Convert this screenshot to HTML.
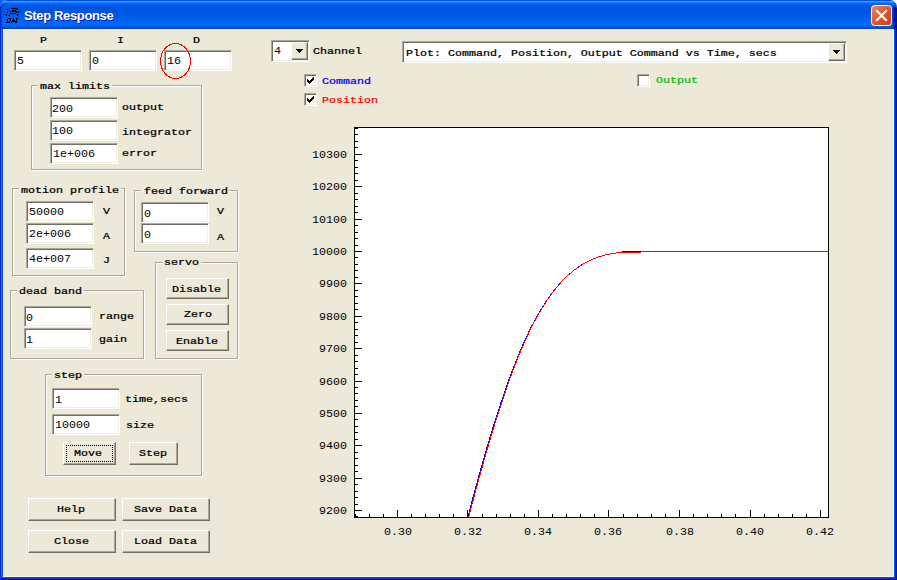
<!DOCTYPE html>
<html><head><meta charset="utf-8">
<style>
html,body{margin:0;padding:0;width:897px;height:580px;overflow:hidden;background:#fff;}
#tlc{position:absolute;left:0;top:0;width:10px;height:10px;background:#0A5CF0;}
*{box-sizing:border-box;}
#win{position:absolute;left:0;top:0;width:897px;height:580px;overflow:hidden;border-radius:7px 7px 0 0;
 background:#ECE9D8;color:#000;}
#win div{position:absolute;}
#title{left:0;top:0;width:897px;height:29px;
 background:linear-gradient(to bottom,#0050E0 0px,#0050E0 1px,#3D98FF 1px,#3D98FF 2px,#1A80FF 2px,#1A80FF 3px,#0066FF 3px,#0066FF 4px,#0060F0 4px,#0060F0 5px,#0058E6 5px,#0058E6 6px,#0054E2 7px,#0053E0 11px,#0055E5 14px,#005CEC 17px,#0062F4 19px,#0066FC 22px,#0068FF 24px,#0064FC 25px,#0060F4 26px,#0060F4 27px,#0050DD 27px,#0050DD 28px,#0040CC 28px,#0040CC 29px);}
#ttext{left:24px;top:7px;font-family:"Liberation Sans",sans-serif;font-weight:bold;font-size:13px;line-height:18px;color:#fff;text-shadow:1px 1px 0 #0A1E9A;white-space:nowrap;letter-spacing:-0.35px;}
.edit{background:#fff;border:1px solid;border-color:#ACA899 #fff #fff #ACA899;box-shadow:inset 1px 1px 0 #716F64,inset -1px -1px 0 #F1EFE2;}
.btn{background:#ECE9D8;border:1px solid;border-color:#FFF #716F64 #716F64 #FFF;box-shadow:inset -1px -1px 0 #ACA899;}
.btn.def{}
.focus{left:2px;top:2px;right:2px;bottom:2px;border:1px dotted #000;}
.g1{border:1px solid #ACA899;}
.g2{border:1px solid #fff;}
.gcut{background:#ECE9D8;}
.fl{position:absolute;}
.b{font:11.67px "Liberation Mono",monospace;line-height:14px;white-space:nowrap;-webkit-text-stroke:0.3px currentColor;transform:scaleY(0.8);transform-origin:0 0}
.r{font:11.67px "Liberation Mono",monospace;line-height:14px;white-space:nowrap}
</style></head><body>
<div id="tlc"></div>
<div id="win">
 <div id="title"></div>
 <!-- frame -->
 <div style="left:892px;top:4px;width:1px;height:25px;background:linear-gradient(#0058F0,#0048E0 6px,#0048E0)"></div>
 <div style="left:893px;top:5px;width:1px;height:24px;background:linear-gradient(#0040D8,#0030C8 5px)"></div>
 <div style="left:894px;top:6px;width:1px;height:23px;background:#0020A8"></div>
 <div style="left:895px;top:7px;width:1px;height:22px;background:#001890"></div>
 <div style="left:896px;top:8px;width:1px;height:21px;background:#001080"></div>
 <div style="left:0;top:6px;width:1px;height:23px;background:#0028C8"></div>
 <div style="left:1px;top:4px;width:1px;height:25px;background:#0044DC"></div>
 <div style="left:0;top:29px;width:1px;height:551px;background:#0A28D8"></div>
 <div style="left:1px;top:29px;width:1px;height:551px;background:#1670F0"></div>
 <div style="left:2px;top:29px;width:1px;height:551px;background:#0050E0"></div>
 <div style="left:3px;top:29px;width:1px;height:548px;background:#FFF5DA"></div>
 <div style="left:894px;top:29px;width:1px;height:551px;background:#0A50E8"></div>
 <div style="left:895px;top:29px;width:1px;height:551px;background:#0030C0"></div>
 <div style="left:896px;top:29px;width:1px;height:551px;background:#001A90"></div>
 <div style="left:893px;top:29px;width:1px;height:548px;background:#FFF5DA"></div>
 <div style="left:3px;top:29px;width:891px;height:1px;background:#FFF5DA"></div>
 <div style="left:3px;top:576px;width:891px;height:1px;background:#FFF5DA"></div>
 <div style="left:0;top:577px;width:894px;height:1px;background:#0050F0"></div>
 <div style="left:0;top:578px;width:895px;height:1px;background:#0030C0"></div>
 <div style="left:0;top:579px;width:896px;height:1px;background:#001A90"></div>

 <!-- title icon -->
 <svg class="fl" style="left:0;top:0" width="24" height="26" shape-rendering="crispEdges"><path d="M11 8h7v1h-7zM17 9h1v1h-1zM7 9h1v1h-1zM10 11h1v1h-1zM12 10h2v2h-2zM14 10h2v1h-2zM15 11h2v1h-2zM16 12h1v1h-1zM7 12h1v1h-1zM18 11h1v2h-1zM10 13h6v1h-6zM6 14h1v2h-1zM8 15h2v1h-2zM17 14h1v2h-1zM8 18h3v1h-3zM7 19h1v3h-1zM10 19h1v2h-1zM9 21h1v1h-1zM6 22h4v1h-4zM11 22h1v1h-1zM13 18h1v2h-1zM12 20h3v2h-3zM16 18h2v1h-2zM16 19h1v2h-1zM15 21h2v2h-2z" fill="#000"/></svg>
 <div id="ttext">Step Response</div>
 <!-- close button -->
 <svg class="fl" style="left:871px;top:5px" width="21" height="21" viewBox="0 0 21 21">
  <defs>
   <linearGradient id="cg" x1="0" y1="0" x2="1" y2="1">
    <stop offset="0" stop-color="#F08A6C"/><stop offset="0.45" stop-color="#E4582F"/><stop offset="1" stop-color="#CC3A0E"/>
   </linearGradient>
  </defs>
  <rect x="0.5" y="0.5" width="20" height="20" rx="3" ry="3" fill="url(#cg)" stroke="#fff" stroke-width="1"/>
  <path d="M6 6L15 15M15 6L6 15" stroke="#fff" stroke-width="2.2" stroke-linecap="square"/>
 </svg>

<div class="edit" style="left:14px;top:50px;width:68px;height:21px"></div>
<div class="edit" style="left:89px;top:50px;width:68px;height:21px"></div>
<div class="edit" style="left:164px;top:50px;width:68px;height:21px"></div>
<div class="g2" style="left:32px;top:86px;width:171px;height:85px"></div><div class="g1" style="left:31px;top:85px;width:171px;height:85px"></div><div class="gcut" style="left:38px;top:84px;width:74px;height:3px"></div>
<div class="edit" style="left:50px;top:97px;width:68px;height:21px"></div>
<div class="edit" style="left:50px;top:120px;width:68px;height:21px"></div>
<div class="edit" style="left:50px;top:143px;width:68px;height:21px"></div>
<div class="g2" style="left:13px;top:189px;width:113px;height:88px"></div><div class="g1" style="left:12px;top:188px;width:113px;height:88px"></div><div class="gcut" style="left:19px;top:187px;width:102px;height:3px"></div>
<div class="edit" style="left:26px;top:201px;width:68px;height:21px"></div>
<div class="edit" style="left:26px;top:223px;width:68px;height:21px"></div>
<div class="edit" style="left:26px;top:248px;width:68px;height:21px"></div>
<div class="g2" style="left:135px;top:191px;width:104px;height:62px"></div><div class="g1" style="left:134px;top:190px;width:104px;height:62px"></div><div class="gcut" style="left:141px;top:189px;width:88px;height:3px"></div>
<div class="edit" style="left:141px;top:202px;width:68px;height:21px"></div>
<div class="edit" style="left:141px;top:223px;width:68px;height:21px"></div>
<div class="g2" style="left:156px;top:263px;width:83px;height:97px"></div><div class="g1" style="left:155px;top:262px;width:83px;height:97px"></div><div class="gcut" style="left:162px;top:261px;width:39px;height:3px"></div>
<div class="btn" style="left:166px;top:278px;width:63px;height:21px"></div>
<div class="btn" style="left:166px;top:304px;width:63px;height:21px"></div>
<div class="btn" style="left:166px;top:330px;width:63px;height:21px"></div>
<div class="g2" style="left:11px;top:291px;width:134px;height:69px"></div><div class="g1" style="left:10px;top:290px;width:134px;height:69px"></div><div class="gcut" style="left:17px;top:289px;width:67px;height:3px"></div>
<div class="edit" style="left:24px;top:306px;width:68px;height:21px"></div>
<div class="edit" style="left:24px;top:328px;width:68px;height:21px"></div>
<div class="g2" style="left:46px;top:375px;width:157px;height:102px"></div><div class="g1" style="left:45px;top:374px;width:157px;height:102px"></div><div class="gcut" style="left:52px;top:373px;width:32px;height:3px"></div>
<div class="edit" style="left:52px;top:388px;width:68px;height:21px"></div>
<div class="edit" style="left:52px;top:414px;width:68px;height:21px"></div>
<div class="btn def" style="left:63px;top:442px;width:53px;height:23px"><div class="focus"></div></div>
<div class="btn" style="left:129px;top:442px;width:49px;height:23px"></div>
<div class="btn" style="left:28px;top:498px;width:88px;height:23px"></div>
<div class="btn" style="left:122px;top:498px;width:88px;height:23px"></div>
<div class="btn" style="left:28px;top:530px;width:88px;height:23px"></div>
<div class="btn" style="left:122px;top:530px;width:88px;height:23px"></div>
<div class="edit" style="left:271px;top:40px;width:39px;height:22px"></div>
<div class="btn" style="left:291px;top:42px;width:17px;height:18px"></div>
<svg style="position:absolute;left:296px;top:49px" width="7" height="4"><path d="M0 0h7v1h-1v1h-1v1h-1v1h-1v-1h-1v-1h-1v-1h-1z" fill="#000" shape-rendering="crispEdges"/></svg>
<div class="edit" style="left:402px;top:41px;width:445px;height:22px"></div>
<div class="btn" style="left:828px;top:43px;width:17px;height:18px"></div>
<svg style="position:absolute;left:833px;top:50px" width="7" height="4"><path d="M0 0h7v1h-1v1h-1v1h-1v1h-1v-1h-1v-1h-1v-1h-1z" fill="#000" shape-rendering="crispEdges"/></svg>
<div class="edit" style="left:304px;top:74px;width:13px;height:13px"></div>
<svg style="position:absolute;left:307px;top:77px" width="7" height="7" shape-rendering="crispEdges"><path d="M6 0h1v3h-1zM5 1h1v3h-1zM0 2h1v3h-1zM1 3h1v3h-1zM2 4h1v3h-1zM3 3h1v3h-1zM4 2h1v3h-1z" fill="#000"/></svg>
<div class="edit" style="left:304px;top:93px;width:13px;height:13px"></div>
<svg style="position:absolute;left:307px;top:96px" width="7" height="7" shape-rendering="crispEdges"><path d="M6 0h1v3h-1zM5 1h1v3h-1zM0 2h1v3h-1zM1 3h1v3h-1zM2 4h1v3h-1zM3 3h1v3h-1zM4 2h1v3h-1z" fill="#000"/></svg>
<div class="edit" style="left:637px;top:74px;width:13px;height:13px"></div>

 <svg class="fl" style="left:155px;top:40px" width="40" height="42" shape-rendering="crispEdges"><ellipse cx="20.5" cy="21" rx="15" ry="17.5" fill="none" stroke="#FF0000" stroke-width="1"/></svg>

 <!-- chart -->
 <div style="left:354px;top:127px;width:475px;height:391px;background:#fff"></div>
 <svg class="fl" style="left:0;top:0" width="897" height="580" shape-rendering="crispEdges">
  <path d="M467 516h1v1h-1zM468 513h1v3h-1zM469 509h1v4h-1zM470 505h1v4h-1zM471 501h1v4h-1zM472 497h1v4h-1zM473 494h1v3h-1zM474 490h1v4h-1zM475 486h1v4h-1zM476 483h1v3h-1zM477 479h1v4h-1zM478 475h1v4h-1zM479 472h1v3h-1zM480 468h1v4h-1zM481 465h1v3h-1zM482 461h1v4h-1zM483 458h1v3h-1zM484 454h1v4h-1zM485 451h1v3h-1zM486 447h1v4h-1zM487 444h1v3h-1zM488 441h1v3h-1zM489 437h1v4h-1zM490 434h1v3h-1zM491 431h1v3h-1zM492 427h1v4h-1zM493 424h1v3h-1zM494 421h1v3h-1zM495 418h1v3h-1zM496 415h1v3h-1zM497 412h1v3h-1zM498 409h1v3h-1zM499 406h1v3h-1zM500 402h1v4h-1zM501 400h1v2h-1zM502 397h1v3h-1zM503 394h1v3h-1zM504 391h1v3h-1zM505 388h1v3h-1zM506 385h1v3h-1zM507 382h1v3h-1zM508 379h1v3h-1zM509 377h1v2h-1zM510 374h1v3h-1zM511 371h1v3h-1zM512 369h1v2h-1zM513 366h1v3h-1zM514 364h1v2h-1zM515 361h1v3h-1zM516 359h1v2h-1zM517 356h1v3h-1zM518 354h1v2h-1zM519 351h1v3h-1zM520 349h1v2h-1zM521 347h1v2h-1zM522 344h1v3h-1zM523 342h1v2h-1zM524 340h1v2h-1zM525 338h1v2h-1zM526 336h1v2h-1zM527 334h1v2h-1zM528 331h1v3h-1zM529 329h1v2h-1zM530 327h1v2h-1zM531 325h1v2h-1zM532 324h1v1h-1zM533 322h1v2h-1zM534 320h1v2h-1zM535 318h1v2h-1zM536 316h1v2h-1zM537 314h1v2h-1zM538 313h1v1h-1zM539 311h1v2h-1zM540 309h1v2h-1zM541 308h1v1h-1zM542 306h1v2h-1zM543 305h1v1h-1zM544 303h1v2h-1zM545 301h1v2h-1zM546 300h1v1h-1zM547 299h1v1h-1zM548 297h1v2h-1zM549 296h1v1h-1zM550 294h1v2h-1zM551 293h1v1h-1zM552 292h1v1h-1zM553 290h1v2h-1zM554 289h1v1h-1zM555 288h1v1h-1zM556 287h1v1h-1zM557 286h1v1h-1zM558 284h1v2h-1zM559 283h1v1h-1zM560 282h1v1h-1zM561 281h1v1h-1zM562 280h1v1h-1zM563 279h1v1h-1zM564 278h1v1h-1zM565 277h1v1h-1zM566 276h1v1h-1zM567 275h1v1h-1zM568 274h1v1h-1zM569 273h1v1h-1zM570 273h1v1h-1zM571 272h1v1h-1zM572 271h1v1h-1zM573 270h1v1h-1zM574 269h1v1h-1zM575 269h1v1h-1zM576 268h1v1h-1zM577 267h1v1h-1zM578 266h1v1h-1zM579 266h1v1h-1zM580 265h1v1h-1zM581 264h1v1h-1zM582 264h1v1h-1zM583 263h1v1h-1zM584 263h1v1h-1zM585 262h1v1h-1zM586 262h1v1h-1zM587 261h1v1h-1zM588 261h1v1h-1zM589 260h1v1h-1zM590 260h1v1h-1zM591 259h1v1h-1zM592 259h1v1h-1zM593 258h1v1h-1zM594 258h1v1h-1zM595 258h1v1h-1zM596 257h1v1h-1zM597 257h1v1h-1zM598 256h1v1h-1zM599 256h1v1h-1zM600 256h1v1h-1zM601 256h1v1h-1zM602 255h1v1h-1zM603 255h1v1h-1zM604 255h1v1h-1zM605 254h1v1h-1zM606 254h1v1h-1zM607 254h1v1h-1zM608 254h1v1h-1zM609 254h1v1h-1zM610 253h1v1h-1zM611 253h1v1h-1zM612 253h1v1h-1zM613 253h1v1h-1zM614 253h1v1h-1zM615 253h1v1h-1zM616 252h1v1h-1zM617 252h1v1h-1zM618 252h1v1h-1zM619 252h1v1h-1zM620 252h1v1h-1zM621 252h1v1h-1zM622 252h1v1h-1zM623 252h1v1h-1zM624 252h1v1h-1zM625 252h1v1h-1zM626 251h1v1h-1zM627 251h1v1h-1zM628 251h1v1h-1zM629 251h1v1h-1zM630 251h1v1h-1zM631 251h1v1h-1zM632 251h1v1h-1zM633 251h1v1h-1zM634 251h1v1h-1zM635 251h1v1h-1zM636 251h1v1h-1zM637 251h1v1h-1zM638 251h1v1h-1zM639 251h1v1h-1zM640 251h1v1h-1zM641 251h1v1h-1zM642 251h1v1h-1zM643 251h1v1h-1zM644 251h1v1h-1zM645 251h1v1h-1zM646 251h1v1h-1zM647 251h1v1h-1zM648 251h1v1h-1zM649 251h1v1h-1zM650 251h1v1h-1zM651 251h1v1h-1zM652 251h1v1h-1zM653 251h1v1h-1zM654 251h1v1h-1zM655 251h1v1h-1zM656 251h1v1h-1zM657 251h1v1h-1zM658 251h1v1h-1zM659 251h1v1h-1zM660 251h1v1h-1zM661 251h1v1h-1zM662 251h1v1h-1zM663 251h1v1h-1zM664 251h1v1h-1zM665 251h1v1h-1zM666 251h1v1h-1zM667 251h1v1h-1zM668 251h1v1h-1zM669 251h1v1h-1zM670 251h1v1h-1zM671 251h1v1h-1zM672 251h1v1h-1zM673 251h1v1h-1zM674 251h1v1h-1zM675 251h1v1h-1zM676 251h1v1h-1zM677 251h1v1h-1zM678 251h1v1h-1zM679 251h1v1h-1zM680 251h1v1h-1zM681 251h1v1h-1zM682 251h1v1h-1zM683 251h1v1h-1zM684 251h1v1h-1zM685 251h1v1h-1zM686 251h1v1h-1zM687 251h1v1h-1zM688 251h1v1h-1zM689 251h1v1h-1zM690 251h1v1h-1zM691 251h1v1h-1zM692 251h1v1h-1zM693 251h1v1h-1zM694 251h1v1h-1zM695 251h1v1h-1zM696 251h1v1h-1zM697 251h1v1h-1zM698 251h1v1h-1zM699 251h1v1h-1zM700 251h1v1h-1zM701 251h1v1h-1zM702 251h1v1h-1zM703 251h1v1h-1zM704 251h1v1h-1zM705 251h1v1h-1zM706 251h1v1h-1zM707 251h1v1h-1zM708 251h1v1h-1zM709 251h1v1h-1zM710 251h1v1h-1zM711 251h1v1h-1zM712 251h1v1h-1zM713 251h1v1h-1zM714 251h1v1h-1zM715 251h1v1h-1zM716 251h1v1h-1zM717 251h1v1h-1zM718 251h1v1h-1zM719 251h1v1h-1zM720 251h1v1h-1zM721 251h1v1h-1zM722 251h1v1h-1zM723 251h1v1h-1zM724 251h1v1h-1zM725 251h1v1h-1zM726 251h1v1h-1zM727 251h1v1h-1zM728 251h1v1h-1zM729 251h1v1h-1zM730 251h1v1h-1zM731 251h1v1h-1zM732 251h1v1h-1zM733 251h1v1h-1zM734 251h1v1h-1zM735 251h1v1h-1zM736 251h1v1h-1zM737 251h1v1h-1zM738 251h1v1h-1zM739 251h1v1h-1zM740 251h1v1h-1zM741 251h1v1h-1zM742 251h1v1h-1zM743 251h1v1h-1zM744 251h1v1h-1zM745 251h1v1h-1zM746 251h1v1h-1zM747 251h1v1h-1zM748 251h1v1h-1zM749 251h1v1h-1zM750 251h1v1h-1zM751 251h1v1h-1zM752 251h1v1h-1zM753 251h1v1h-1zM754 251h1v1h-1zM755 251h1v1h-1zM756 251h1v1h-1zM757 251h1v1h-1zM758 251h1v1h-1zM759 251h1v1h-1zM760 251h1v1h-1zM761 251h1v1h-1zM762 251h1v1h-1zM763 251h1v1h-1zM764 251h1v1h-1zM765 251h1v1h-1zM766 251h1v1h-1zM767 251h1v1h-1zM768 251h1v1h-1zM769 251h1v1h-1zM770 251h1v1h-1zM771 251h1v1h-1zM772 251h1v1h-1zM773 251h1v1h-1zM774 251h1v1h-1zM775 251h1v1h-1zM776 251h1v1h-1zM777 251h1v1h-1zM778 251h1v1h-1zM779 251h1v1h-1zM780 251h1v1h-1zM781 251h1v1h-1zM782 251h1v1h-1zM783 251h1v1h-1zM784 251h1v1h-1zM785 251h1v1h-1zM786 251h1v1h-1zM787 251h1v1h-1zM788 251h1v1h-1zM789 251h1v1h-1zM790 251h1v1h-1zM791 251h1v1h-1zM792 251h1v1h-1zM793 251h1v1h-1zM794 251h1v1h-1zM795 251h1v1h-1zM796 251h1v1h-1zM797 251h1v1h-1zM798 251h1v1h-1zM799 251h1v1h-1zM800 251h1v1h-1zM801 251h1v1h-1zM802 251h1v1h-1zM803 251h1v1h-1zM804 251h1v1h-1zM805 251h1v1h-1zM806 251h1v1h-1zM807 251h1v1h-1zM808 251h1v1h-1zM809 251h1v1h-1zM810 251h1v1h-1zM811 251h1v1h-1zM812 251h1v1h-1zM813 251h1v1h-1zM814 251h1v1h-1zM815 251h1v1h-1zM816 251h1v1h-1zM817 251h1v1h-1zM818 251h1v1h-1zM819 251h1v1h-1zM820 251h1v1h-1zM821 251h1v1h-1zM822 251h1v1h-1zM823 251h1v1h-1zM824 251h1v1h-1zM825 251h1v1h-1zM826 251h1v1h-1zM827 251h1v1h-1z" fill="#0000FF"/>
  <path d="M468 516h1v1h-1zM469 512h1v4h-1zM470 508h1v4h-1zM471 504h1v4h-1zM472 501h1v3h-1zM473 497h1v4h-1zM474 493h1v4h-1zM475 489h1v4h-1zM476 486h1v3h-1zM477 482h1v4h-1zM478 478h1v4h-1zM479 475h1v3h-1zM480 471h1v4h-1zM481 468h1v3h-1zM482 464h1v4h-1zM483 460h1v4h-1zM484 457h1v3h-1zM485 453h1v4h-1zM486 450h1v3h-1zM487 447h1v3h-1zM488 443h1v4h-1zM489 440h1v3h-1zM490 436h1v4h-1zM491 433h1v3h-1zM492 430h1v3h-1zM493 427h1v3h-1zM494 423h1v4h-1zM495 420h1v3h-1zM496 417h1v3h-1zM497 414h1v3h-1zM498 411h1v3h-1zM499 408h1v3h-1zM500 405h1v3h-1zM501 402h1v3h-1zM502 399h1v3h-1zM503 396h1v3h-1zM504 393h1v3h-1zM505 390h1v3h-1zM506 387h1v3h-1zM507 384h1v3h-1zM508 381h1v3h-1zM509 378h1v3h-1zM510 376h1v2h-1zM511 373h1v3h-1zM512 370h1v3h-1zM513 368h1v2h-1zM514 365h1v3h-1zM515 363h1v2h-1zM516 360h1v3h-1zM517 357h1v3h-1zM518 355h1v2h-1zM519 353h1v2h-1zM520 350h1v3h-1zM521 348h1v2h-1zM522 346h1v2h-1zM523 343h1v3h-1zM524 341h1v2h-1zM525 339h1v2h-1zM526 337h1v2h-1zM527 335h1v2h-1zM528 332h1v3h-1zM529 330h1v2h-1zM530 328h1v2h-1zM531 326h1v2h-1zM532 324h1v2h-1zM533 322h1v2h-1zM534 321h1v1h-1zM535 319h1v2h-1zM536 317h1v2h-1zM537 315h1v2h-1zM538 313h1v2h-1zM539 312h1v1h-1zM540 310h1v2h-1zM541 308h1v2h-1zM542 307h1v1h-1zM543 305h1v2h-1zM544 304h1v1h-1zM545 302h1v2h-1zM546 300h1v2h-1zM547 299h1v1h-1zM548 298h1v1h-1zM549 296h1v2h-1zM550 295h1v1h-1zM551 293h1v2h-1zM552 292h1v1h-1zM553 291h1v1h-1zM554 290h1v1h-1zM555 288h1v2h-1zM556 287h1v1h-1zM557 286h1v1h-1zM558 285h1v1h-1zM559 284h1v1h-1zM560 282h1v2h-1zM561 281h1v1h-1zM562 280h1v1h-1zM563 279h1v1h-1zM564 278h1v1h-1zM565 277h1v1h-1zM566 276h1v1h-1zM567 275h1v1h-1zM568 274h1v1h-1zM569 274h1v1h-1zM570 273h1v1h-1zM571 272h1v1h-1zM572 271h1v1h-1zM573 270h1v1h-1zM574 269h1v1h-1zM575 269h1v1h-1zM576 268h1v1h-1zM577 267h1v1h-1zM578 267h1v1h-1zM579 266h1v1h-1zM580 265h1v1h-1zM581 265h1v1h-1zM582 264h1v1h-1zM583 263h1v1h-1zM584 263h1v1h-1zM585 262h1v1h-1zM586 262h1v1h-1zM587 261h1v1h-1zM588 261h1v1h-1zM589 260h1v1h-1zM590 260h1v1h-1zM591 259h1v1h-1zM592 259h1v1h-1zM593 258h1v1h-1zM594 258h1v1h-1zM595 258h1v1h-1zM596 257h1v1h-1zM597 257h1v1h-1zM598 256h1v1h-1zM599 256h1v1h-1zM600 256h1v1h-1zM601 256h1v1h-1zM602 255h1v1h-1zM603 255h1v1h-1zM604 255h1v1h-1zM605 254h1v1h-1zM606 254h1v1h-1zM607 254h1v1h-1zM608 254h1v1h-1zM609 254h1v1h-1zM610 253h1v1h-1zM611 253h1v1h-1zM612 253h1v1h-1zM613 253h1v1h-1zM614 253h1v1h-1zM615 253h1v1h-1zM616 252h1v1h-1zM617 252h1v1h-1zM618 252h1v1h-1zM619 252h1v1h-1zM620 252h1v1h-1zM621 252h1v1h-1zM622 252h1v1h-1zM623 252h1v1h-1zM624 252h1v1h-1zM625 252h1v1h-1zM626 252h1v1h-1zM627 252h1v1h-1zM628 252h1v1h-1zM629 252h1v1h-1zM630 252h1v1h-1zM631 252h1v1h-1zM632 252h1v1h-1zM633 252h1v1h-1zM634 252h1v1h-1zM635 252h1v1h-1zM636 252h1v1h-1zM637 252h1v1h-1zM638 252h1v1h-1zM639 252h1v1h-1zM640 252h1v1h-1zM641 251h1v1h-1zM642 251h1v1h-1zM643 251h1v1h-1zM644 251h1v1h-1zM645 251h1v1h-1zM646 251h1v1h-1zM647 251h1v1h-1zM648 251h1v1h-1zM649 251h1v1h-1zM650 251h1v1h-1zM651 251h1v1h-1zM652 251h1v1h-1zM653 251h1v1h-1zM654 251h1v1h-1zM655 251h1v1h-1zM656 251h1v1h-1zM657 251h1v1h-1zM658 251h1v1h-1zM659 251h1v1h-1zM660 251h1v1h-1zM661 251h1v1h-1zM662 251h1v1h-1zM663 251h1v1h-1zM664 251h1v1h-1zM665 251h1v1h-1zM666 251h1v1h-1zM667 251h1v1h-1zM668 251h1v1h-1zM669 251h1v1h-1zM670 251h1v1h-1zM671 251h1v1h-1zM672 251h1v1h-1zM673 251h1v1h-1zM674 251h1v1h-1zM675 251h1v1h-1zM676 251h1v1h-1zM677 251h1v1h-1zM678 251h1v1h-1zM679 251h1v1h-1zM680 251h1v1h-1zM681 251h1v1h-1zM682 251h1v1h-1zM683 251h1v1h-1zM684 251h1v1h-1zM685 251h1v1h-1zM686 251h1v1h-1zM687 251h1v1h-1zM688 251h1v1h-1zM689 251h1v1h-1zM690 251h1v1h-1zM691 251h1v1h-1zM692 251h1v1h-1zM693 251h1v1h-1zM694 251h1v1h-1zM695 251h1v1h-1zM696 251h1v1h-1zM697 251h1v1h-1zM698 251h1v1h-1zM699 251h1v1h-1zM700 251h1v1h-1zM701 251h1v1h-1zM702 251h1v1h-1zM703 251h1v1h-1zM704 251h1v1h-1zM705 251h1v1h-1zM706 251h1v1h-1zM707 251h1v1h-1zM708 251h1v1h-1zM709 251h1v1h-1zM710 251h1v1h-1zM711 251h1v1h-1zM712 251h1v1h-1zM713 251h1v1h-1zM714 251h1v1h-1zM715 251h1v1h-1zM716 251h1v1h-1zM717 251h1v1h-1zM718 251h1v1h-1zM719 251h1v1h-1zM720 251h1v1h-1zM721 251h1v1h-1zM722 251h1v1h-1zM723 251h1v1h-1zM724 251h1v1h-1zM725 251h1v1h-1zM726 251h1v1h-1zM727 251h1v1h-1zM728 251h1v1h-1zM729 251h1v1h-1zM730 251h1v1h-1zM731 251h1v1h-1zM732 251h1v1h-1zM733 251h1v1h-1zM734 251h1v1h-1zM735 251h1v1h-1zM736 251h1v1h-1zM737 251h1v1h-1zM738 251h1v1h-1zM739 251h1v1h-1zM740 251h1v1h-1zM741 251h1v1h-1zM742 251h1v1h-1zM743 251h1v1h-1zM744 251h1v1h-1zM745 251h1v1h-1zM746 251h1v1h-1zM747 251h1v1h-1zM748 251h1v1h-1zM749 251h1v1h-1zM750 251h1v1h-1zM751 251h1v1h-1zM752 251h1v1h-1zM753 251h1v1h-1zM754 251h1v1h-1zM755 251h1v1h-1zM756 251h1v1h-1zM757 251h1v1h-1zM758 251h1v1h-1zM759 251h1v1h-1zM760 251h1v1h-1zM761 251h1v1h-1zM762 251h1v1h-1zM763 251h1v1h-1zM764 251h1v1h-1zM765 251h1v1h-1zM766 251h1v1h-1zM767 251h1v1h-1zM768 251h1v1h-1zM769 251h1v1h-1zM770 251h1v1h-1zM771 251h1v1h-1zM772 251h1v1h-1zM773 251h1v1h-1zM774 251h1v1h-1zM775 251h1v1h-1zM776 251h1v1h-1zM777 251h1v1h-1zM778 251h1v1h-1zM779 251h1v1h-1zM780 251h1v1h-1zM781 251h1v1h-1zM782 251h1v1h-1zM783 251h1v1h-1zM784 251h1v1h-1zM785 251h1v1h-1zM786 251h1v1h-1zM787 251h1v1h-1zM788 251h1v1h-1zM789 251h1v1h-1zM790 251h1v1h-1zM791 251h1v1h-1zM792 251h1v1h-1zM793 251h1v1h-1zM794 251h1v1h-1zM795 251h1v1h-1zM796 251h1v1h-1zM797 251h1v1h-1zM798 251h1v1h-1zM799 251h1v1h-1zM800 251h1v1h-1zM801 251h1v1h-1zM802 251h1v1h-1zM803 251h1v1h-1zM804 251h1v1h-1zM805 251h1v1h-1zM806 251h1v1h-1zM807 251h1v1h-1zM808 251h1v1h-1zM809 251h1v1h-1zM810 251h1v1h-1zM811 251h1v1h-1zM812 251h1v1h-1zM813 251h1v1h-1zM814 251h1v1h-1zM815 251h1v1h-1zM816 251h1v1h-1zM817 251h1v1h-1zM818 251h1v1h-1zM819 251h1v1h-1zM820 251h1v1h-1zM821 251h1v1h-1zM822 251h1v1h-1zM823 251h1v1h-1zM824 251h1v1h-1zM825 251h1v1h-1zM826 251h1v1h-1zM827 251h1v1h-1z" fill="#FF0000"/>
  <path d="M622 251h19v1h-19z" fill="#0000FF"/>
  <rect x="354.5" y="127.5" width="474" height="390" fill="none" stroke="#000" stroke-width="1"/>
  <path d="M355 516.5h3M355 510.5h7M355 504.5h3M355 497.5h3M355 491.5h3M355 484.5h3M355 478.5h7M355 471.5h3M355 465.5h3M355 458.5h3M355 452.5h3M355 445.5h7M355 439.5h3M355 432.5h3M355 426.5h3M355 419.5h3M355 413.5h7M355 406.5h3M355 400.5h3M355 393.5h3M355 387.5h3M355 381.5h7M355 374.5h3M355 368.5h3M355 361.5h3M355 355.5h3M355 348.5h7M355 342.5h3M355 335.5h3M355 329.5h3M355 322.5h3M355 316.5h7M355 309.5h3M355 303.5h3M355 296.5h3M355 290.5h3M355 283.5h7M355 277.5h3M355 270.5h3M355 264.5h3M355 257.5h3M355 251.5h7M355 245.5h3M355 238.5h3M355 232.5h3M355 225.5h3M355 219.5h7M355 212.5h3M355 206.5h3M355 199.5h3M355 193.5h3M355 186.5h7M355 180.5h3M355 173.5h3M355 167.5h3M355 160.5h3M355 154.5h7M355 147.5h3M355 141.5h3M355 134.5h3M355 128.5h3M355.5 517v-3M369.5 517v-3M383.5 517v-3M397.5 517v-7M411.5 517v-3M425.5 517v-3M439.5 517v-3M453.5 517v-3M467.5 517v-7M482.5 517v-3M496.5 517v-3M510.5 517v-3M524.5 517v-3M538.5 517v-7M552.5 517v-3M566.5 517v-3M580.5 517v-3M594.5 517v-3M608.5 517v-7M623.5 517v-3M637.5 517v-3M651.5 517v-3M665.5 517v-3M679.5 517v-7M693.5 517v-3M707.5 517v-3M721.5 517v-3M735.5 517v-3M750.5 517v-7M764.5 517v-3M778.5 517v-3M792.5 517v-3M806.5 517v-3M820.5 517v-7" stroke="#000" stroke-width="1" fill="none"/>
 </svg>

<div class="b" style="left:40px;top:35px">P</div>
<div class="b" style="left:117px;top:35px">I</div>
<div class="b" style="left:193px;top:35px">D</div>
<div class="r" style="left:17px;top:54px">5</div>
<div class="r" style="left:92px;top:54px">0</div>
<div class="r" style="left:167px;top:54px">16</div>
<div class="b" style="left:40px;top:81px">max limits</div>
<div class="r" style="left:52px;top:102px">200</div>
<div class="r" style="left:52px;top:124px">100</div>
<div class="r" style="left:53px;top:147px">1e+006</div>
<div class="b" style="left:122px;top:102px">output</div>
<div class="b" style="left:122px;top:127px">integrator</div>
<div class="b" style="left:122px;top:148px">error</div>
<div class="b" style="left:21px;top:185px">motion profile</div>
<div class="r" style="left:29px;top:205px">50000</div>
<div class="r" style="left:29px;top:227px">2e+006</div>
<div class="r" style="left:29px;top:252px">4e+007</div>
<div class="b" style="left:103px;top:206px">V</div>
<div class="b" style="left:103px;top:231px">A</div>
<div class="b" style="left:103px;top:255px">J</div>
<div class="b" style="left:144px;top:186px">feed forward</div>
<div class="r" style="left:144px;top:207px">0</div>
<div class="r" style="left:144px;top:228px">0</div>
<div class="b" style="left:217px;top:206px">V</div>
<div class="b" style="left:217px;top:232px">A</div>
<div class="b" style="left:164px;top:257px">servo</div>
<div class="b" style="left:172px;top:284px">Disable</div>
<div class="b" style="left:184px;top:309px">Zero</div>
<div class="b" style="left:176px;top:336px">Enable</div>
<div class="b" style="left:19px;top:286px">dead band</div>
<div class="r" style="left:26px;top:311px">0</div>
<div class="r" style="left:26px;top:333px">1</div>
<div class="b" style="left:99px;top:311px">range</div>
<div class="b" style="left:99px;top:334px">gain</div>
<div class="b" style="left:54px;top:370px">step</div>
<div class="r" style="left:55px;top:393px">1</div>
<div class="r" style="left:55px;top:418px">10000</div>
<div class="b" style="left:125px;top:394px">time,secs</div>
<div class="b" style="left:126px;top:420px">size</div>
<div class="b" style="left:74px;top:448px">Move</div>
<div class="b" style="left:139px;top:448px">Step</div>
<div class="b" style="left:57px;top:504px">Help</div>
<div class="b" style="left:134px;top:504px">Save Data</div>
<div class="b" style="left:54px;top:536px">Close</div>
<div class="b" style="left:134px;top:536px">Load Data</div>
<div class="r" style="left:274px;top:44px">4</div>
<div class="b" style="left:313px;top:46px">Channel</div>
<div class="b" style="left:406px;top:48px">Plot: Command, Position, Output Command vs Time, secs</div>
<div class="b" style="left:322px;top:76px;color:#0000FF">Command</div>
<div class="b" style="left:322px;top:95px;color:#FF0000">Position</div>
<div class="b" style="left:656px;top:75px;color:#00C000">Output</div>
<div class="r" style="left:319px;top:504px">9200</div>
<div class="r" style="left:319px;top:472px">9300</div>
<div class="r" style="left:319px;top:439px">9400</div>
<div class="r" style="left:319px;top:407px">9500</div>
<div class="r" style="left:319px;top:375px">9600</div>
<div class="r" style="left:319px;top:342px">9700</div>
<div class="r" style="left:319px;top:310px">9800</div>
<div class="r" style="left:319px;top:277px">9900</div>
<div class="r" style="left:312px;top:245px">10000</div>
<div class="r" style="left:312px;top:213px">10100</div>
<div class="r" style="left:312px;top:180px">10200</div>
<div class="r" style="left:312px;top:148px">10300</div>
<div class="r" style="left:384px;top:525px">0.30</div>
<div class="r" style="left:454px;top:525px">0.32</div>
<div class="r" style="left:524px;top:525px">0.34</div>
<div class="r" style="left:594px;top:525px">0.36</div>
<div class="r" style="left:666px;top:525px">0.38</div>
<div class="r" style="left:736px;top:525px">0.40</div>
<div class="r" style="left:806px;top:525px">0.42</div>
</div>
</body></html>
